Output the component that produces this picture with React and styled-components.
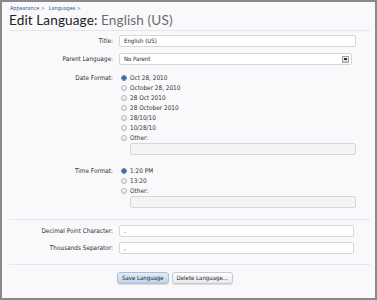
import React from 'react';
import styled, { createGlobalStyle } from 'styled-components';

const GlobalStyle = createGlobalStyle`
  html, body {
    margin: 0;
    padding: 0;
    background: #f9f9fb;
  }
  * {
    box-sizing: border-box;
  }
`;

const Frame = styled.div`
  height: 300px;
  border: 2px solid #8a8a8a;
  background: #f9f9fb;
  padding: 3px 7px 0 7px;
  font-family: "DejaVu Sans Condensed", "DejaVu Sans", sans-serif;
  font-size: 6.4px;
  color: #333;
`;

const Breadcrumb = styled.div`
  display: flex;
  gap: 4px;
  height: 6px;
  line-height: 6px;
  font-size: 5.4px;
  color: #2a5b8c;
  padding-left: 1px;
`;

const Crumb = styled.span`
  &::after {
    content: ' >';
    color: #777;
  }
`;

const Heading = styled.h1`
  margin: 2px 0 0 0;
  font-family: Lato, "DejaVu Sans", sans-serif;
  font-weight: 400;
  font-size: 13.6px;
  line-height: 15px;
  color: #222;
  letter-spacing: 0.1px;
`;

const Subject = styled.span`
  color: #6b6b6b;
`;

const Divider = styled.div`
  height: 1px;
  background: #e6e7ec;
  margin: ${p => p.$top || 0}px 0 ${p => p.$bottom || 0}px 0;
  width: 361px;
`;

const Form = styled.div`
  display: flex;
  flex-direction: column;
`;

const Row = styled.div`
  display: grid;
  grid-template-columns: 104px 1fr;
  column-gap: 6px;
  align-items: start;
  margin-top: ${p => p.$gap || 0}px;
`;

const Label = styled.div`
  text-align: right;
  line-height: ${p => p.$lh || 12}px;
  white-space: nowrap;
`;

const TextInput = styled.div`
  width: ${p => p.$width || 237}px;
  height: 12px;
  border: 1px solid #d6d7db;
  border-radius: 2px;
  background: ${p => (p.$muted ? '#f4f4f5' : '#fff')};
  padding-left: 4px;
  line-height: 10px;
  font-size: 6px;
  color: #222;
  margin-left: ${p => p.$indent || 0}px;
`;

const Select = styled(TextInput)`
  display: flex;
  align-items: center;
  justify-content: space-between;
  padding-right: 2px;
`;

const SelectButton = styled.span`
  width: 7px;
  height: 7px;
  border: 1px solid #a4a4a4;
  background: linear-gradient(#f4f4f4, #d2d2d2);
  display: flex;
  align-items: center;
  justify-content: center;

  &::after {
    content: '';
    width: 3px;
    height: 2px;
    background: #333;
  }
`;

const Options = styled.div`
  display: flex;
  flex-direction: column;
  padding-left: 2px;
`;

const Option = styled.div`
  display: flex;
  align-items: center;
  gap: 3px;
  height: 10px;
  line-height: 10px;
`;

const Radio = styled.span`
  width: 6px;
  height: 6px;
  border-radius: 50%;
  border: 1px solid ${p => (p.$checked ? '#5a7fa6' : '#b5b5b5')};
  background: ${p =>
    p.$checked
      ? 'radial-gradient(circle, #2f6ca8 0 1.6px, #dde8f3 1.8px)'
      : 'linear-gradient(#fdfdfd, #e2e2e2)'};
  flex: none;
`;

const Buttons = styled.div`
  display: flex;
  gap: 3px;
  margin: 7px 0 0 108px;
`;

const Button = styled.div`
  height: 12px;
  line-height: 10px;
  padding: 0 4px;
  border: 1px solid ${p => (p.$primary ? '#a9bfd6' : '#c9c9cf')};
  border-radius: 3px;
  background: ${p =>
    p.$primary
      ? 'linear-gradient(#e3edf7, #bed3e8)'
      : 'linear-gradient(#ffffff, #e9e9ee)'};
  box-shadow: 0 1px 1px rgba(0, 0, 0, 0.12);
  color: #222;
  font-size: 6px;
`;

const dateFormats = [
  'Oct 28, 2010',
  'October 28, 2010',
  '28 Oct 2010',
  '28 October 2010',
  '28/10/10',
  '10/28/10',
  'Other:',
];

const timeFormats = ['1:20 PM', '13:20', 'Other:'];

function RadioGroup({ items }) {
  return (
    <Options>
      {items.map((item, i) => (
        <Option key={item}>
          <Radio $checked={i === 0} />
          {item}
        </Option>
      ))}
    </Options>
  );
}

export default function App() {
  return (
    <>
      <GlobalStyle />
      <Frame>
        <Breadcrumb>
          <Crumb>Appearance</Crumb>
          <Crumb>Languages</Crumb>
        </Breadcrumb>
        <Heading>
          Edit Language: <Subject>English (US)</Subject>
        </Heading>
        <Divider $top={2} />
        <Form>
          <Row $gap={4}>
            <Label>Title:</Label>
            <TextInput>English (US)</TextInput>
          </Row>
          <Row $gap={6}>
            <Label>Parent Language:</Label>
            <Select $width={233}>
              No Parent
              <SelectButton />
            </Select>
          </Row>
          <Row $gap={8}>
            <Label $lh={10}>Date Format:</Label>
            <div>
              <RadioGroup items={dateFormats} />
              <TextInput $muted $width={226} $indent={11}>&nbsp;</TextInput>
            </div>
          </Row>
          <Row $gap={11}>
            <Label $lh={10}>Time Format:</Label>
            <div>
              <RadioGroup items={timeFormats} />
              <TextInput $muted $width={226} $indent={11}>&nbsp;</TextInput>
            </div>
          </Row>
          <Divider $top={11} />
          <Row $gap={5}>
            <Label>Decimal Point Character:</Label>
            <TextInput $width={235}>.</TextInput>
          </Row>
          <Row $gap={5}>
            <Label>Thousands Separator:</Label>
            <TextInput $width={235}>,</TextInput>
          </Row>
          <Divider $top={10} />
          <Buttons>
            <Button $primary>Save Language</Button>
            <Button>Delete Language...</Button>
          </Buttons>
        </Form>
      </Frame>
    </>
  );
}
